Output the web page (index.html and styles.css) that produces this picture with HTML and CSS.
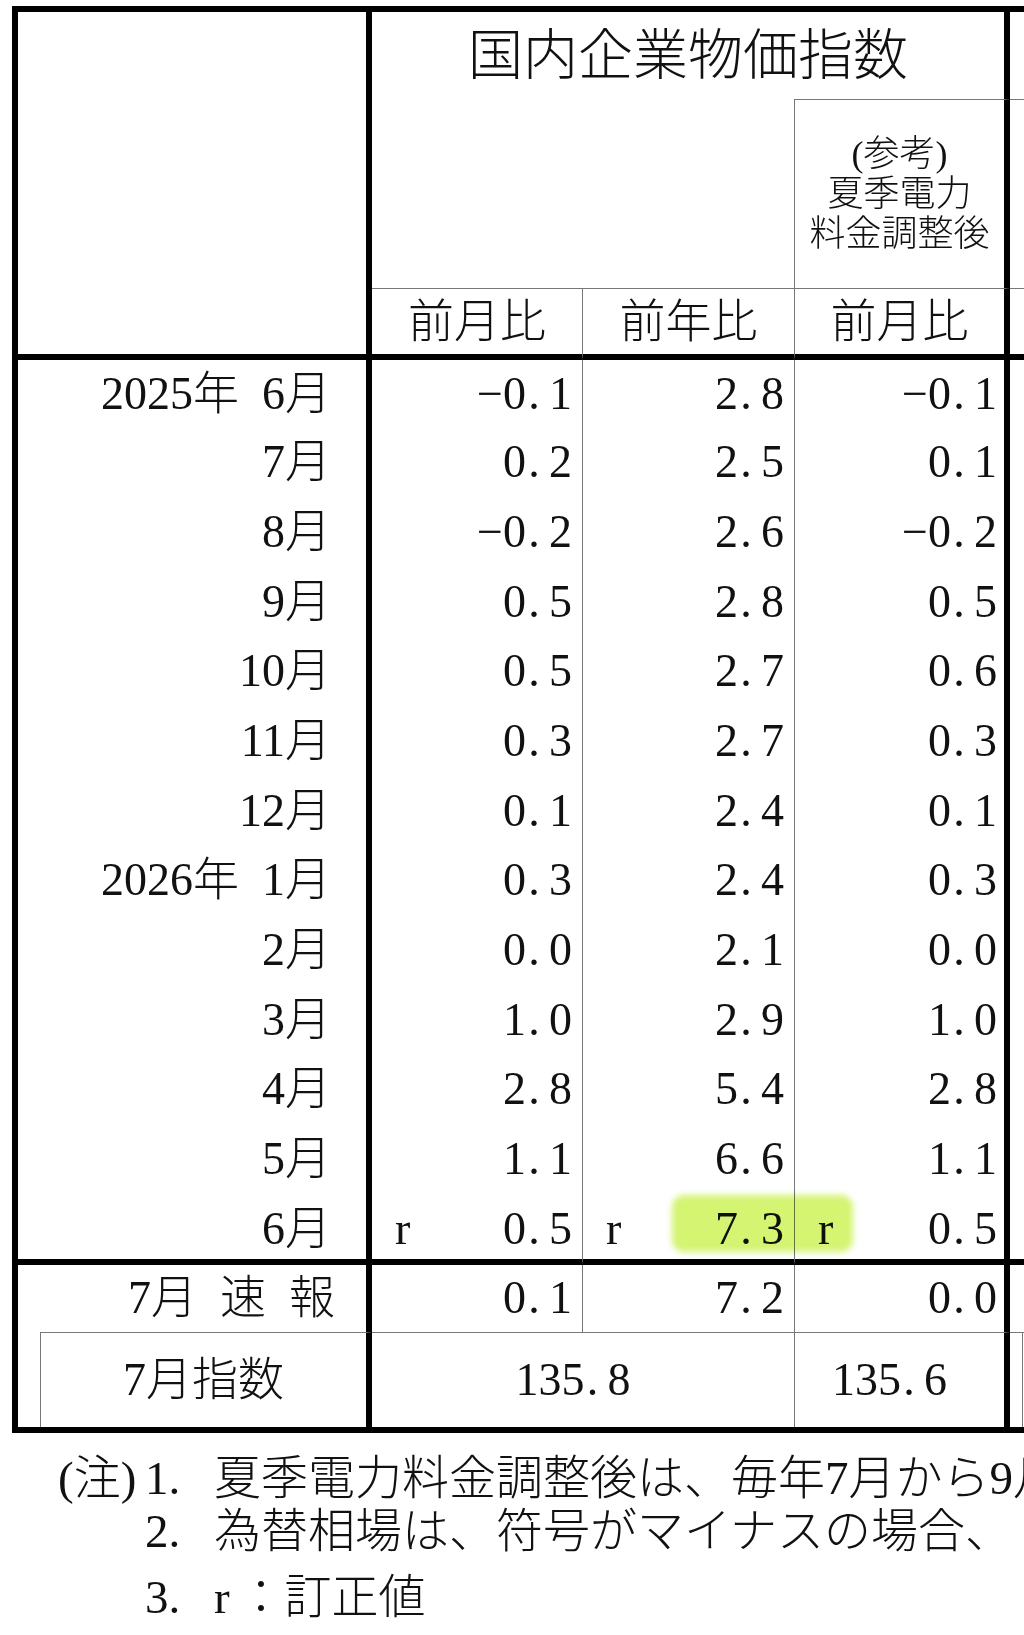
FILE: index.html
```html
<!DOCTYPE html>
<html lang="ja">
<head>
<meta charset="utf-8">
<title>国内企業物価指数</title>
<link rel="stylesheet" href="styles.css">
</head>
<body>
<div class="sheet">
  <div class="c hd-label"></div>
  <div class="c hd-title">国内企業物価指数</div>
  <div class="c hd-ext-a"></div>

  <div class="c hd-blank"></div>
  <div class="c hd-ref"><div>(参考)<br>夏季電力<br>料金調整後</div></div>
  <div class="c hd-ext-b"></div>

  <div class="c hd-sub s1">前月比</div>
  <div class="c hd-sub s2">前年比</div>
  <div class="c hd-sub s3">前月比</div>
  <div class="c hd-ext-c"></div>

  <div class="c lab">2025年&ensp;6月</div><div class="c v1">&minus;0<span class="pt">.</span>1</div><div class="c v2">2<span class="pt">.</span>8</div><div class="c v3">&minus;0<span class="pt">.</span>1</div><div class="c ext"></div>
  <div class="c lab">7月</div><div class="c v1">0<span class="pt">.</span>2</div><div class="c v2">2<span class="pt">.</span>5</div><div class="c v3">0<span class="pt">.</span>1</div><div class="c ext"></div>
  <div class="c lab">8月</div><div class="c v1">&minus;0<span class="pt">.</span>2</div><div class="c v2">2<span class="pt">.</span>6</div><div class="c v3">&minus;0<span class="pt">.</span>2</div><div class="c ext"></div>
  <div class="c lab">9月</div><div class="c v1">0<span class="pt">.</span>5</div><div class="c v2">2<span class="pt">.</span>8</div><div class="c v3">0<span class="pt">.</span>5</div><div class="c ext"></div>
  <div class="c lab">10月</div><div class="c v1">0<span class="pt">.</span>5</div><div class="c v2">2<span class="pt">.</span>7</div><div class="c v3">0<span class="pt">.</span>6</div><div class="c ext"></div>
  <div class="c lab">11月</div><div class="c v1">0<span class="pt">.</span>3</div><div class="c v2">2<span class="pt">.</span>7</div><div class="c v3">0<span class="pt">.</span>3</div><div class="c ext"></div>
  <div class="c lab">12月</div><div class="c v1">0<span class="pt">.</span>1</div><div class="c v2">2<span class="pt">.</span>4</div><div class="c v3">0<span class="pt">.</span>1</div><div class="c ext"></div>
  <div class="c lab">2026年&ensp;1月</div><div class="c v1">0<span class="pt">.</span>3</div><div class="c v2">2<span class="pt">.</span>4</div><div class="c v3">0<span class="pt">.</span>3</div><div class="c ext"></div>
  <div class="c lab">2月</div><div class="c v1">0<span class="pt">.</span>0</div><div class="c v2">2<span class="pt">.</span>1</div><div class="c v3">0<span class="pt">.</span>0</div><div class="c ext"></div>
  <div class="c lab">3月</div><div class="c v1">1<span class="pt">.</span>0</div><div class="c v2">2<span class="pt">.</span>9</div><div class="c v3">1<span class="pt">.</span>0</div><div class="c ext"></div>
  <div class="c lab">4月</div><div class="c v1">2<span class="pt">.</span>8</div><div class="c v2">5<span class="pt">.</span>4</div><div class="c v3">2<span class="pt">.</span>8</div><div class="c ext"></div>
  <div class="c lab">5月</div><div class="c v1">1<span class="pt">.</span>1</div><div class="c v2">6<span class="pt">.</span>6</div><div class="c v3">1<span class="pt">.</span>1</div><div class="c ext"></div>
  <div class="c lab end">6月</div><div class="c v1 rv end"><span class="r">r</span><span>0<span class="pt">.</span>5</span></div><div class="c v2 rv end"><span class="r">r</span><span>7<span class="pt">.</span>3</span></div><div class="c v3 rv end"><span class="r">r</span><span>0<span class="pt">.</span>5</span></div><div class="c ext end"></div>

  <div class="c lab flash">7月&ensp;速&ensp;報</div><div class="c v1">0<span class="pt">.</span>1</div><div class="c v2">7<span class="pt">.</span>2</div><div class="c v3">0<span class="pt">.</span>0</div><div class="c ext"></div>

  <div class="c gap"></div>
  <div class="c idx-lab">7月指数</div>
  <div class="c idx-v">135<span class="pt">.</span>8</div>
  <div class="c idx-v2">135<span class="pt">.</span>6</div>
  <div class="c tail-a"></div>
  <div class="c tail-b"></div>

  <div class="mark"></div>
</div>

<div class="notes">
  <div class="nl">(注)</div><div class="nn">1.</div><div class="nt">夏季電力料金調整後は、毎年7月から9月までの期間について、夏季電力料金の影響を調整したもの。</div>
  <div class="nl"></div><div class="nn">2.</div><div class="nt">為替相場は、符号がマイナスの場合、</div>
  <div class="nl"></div><div class="nn">3.</div><div class="nt"><span class="hw">r</span>：訂正値</div>
</div>
</body>
</html>
```

FILE: styles.css
```css
html, body {
  margin: 0;
  padding: 0;
  background: #fff;
  overflow: hidden;
}

body {
  width: 1024px;
  height: 1635px;
  font-family: "Liberation Serif", "Noto Sans CJK JP", serif;
  font-weight: 300;
  color: #111;
}

.sheet {
  position: relative;
  display: grid;
  width: max-content;
  grid-template-columns: 22px 332px 211px 212px 215px 13px 300px;
  grid-template-rows: 87px 190px 71px 67.67px repeat(11, 69.67px) 70.96px 67px 95px;
  margin: 6px 0 0 12px;
  border-top: 6px solid #000;
  border-left: 6px solid #000;
  border-bottom: 6px solid #000;
  font-size: 46px;
  line-height: 1;
}

.c {
  box-sizing: border-box;
  display: flex;
  align-items: center;
  min-width: 0;
  white-space: nowrap;
}

/* header */
.hd-label {
  grid-column: 1 / 3;
  grid-row: 1 / 4;
  border-right: 6px solid #000;
  border-bottom: 6px solid #000;
}

.hd-title {
  grid-column: 3 / 6;
  justify-content: center;
  border-right: 6px solid #000;
  font-size: 55px;
}

.hd-ext-a {
  grid-column: 6 / 8;
}

.hd-blank {
  grid-column: 3 / 5;
  border-right: 1px solid #777;
  border-bottom: 1px solid #777;
}

.hd-ref {
  grid-column: 5 / 6;
  justify-content: center;
  text-align: center;
  font-size: 36px;
  line-height: 40px;
  border-top: 1px solid #777;
  border-right: 6px solid #000;
  border-bottom: 1px solid #777;
}

.hd-ext-b {
  grid-column: 6 / 8;
  border-top: 1px solid #777;
  border-bottom: 1px solid #777;
}

.hd-sub {
  justify-content: center;
  border-right: 1px solid #777;
  border-bottom: 6px solid #000;
}

.hd-sub.s1 { grid-column: 3; }
.hd-sub.s2 { grid-column: 4; }
.hd-sub.s3 {
  grid-column: 5;
  border-right: 6px solid #000;
}

.hd-ext-c {
  grid-column: 6 / 8;
  border-bottom: 6px solid #000;
}

/* body rows */
.lab {
  grid-column: 1 / 3;
  justify-content: flex-end;
  padding-right: 35px;
  border-right: 6px solid #000;
}

.lab.flash {
  padding-right: 31px;
}

.v1, .v2, .v3 {
  justify-content: flex-end;
}

.v1 {
  grid-column: 3;
  padding-right: 10px;
  border-right: 1px solid #777;
}

.v2 {
  grid-column: 4;
  padding-right: 10px;
  border-right: 1px solid #777;
}

.v3 {
  grid-column: 5;
  padding-right: 7px;
  border-right: 6px solid #000;
}

.ext {
  grid-column: 6 / 8;
}

.end {
  border-bottom: 6px solid #000;
  padding-top: 5px;
}

.rv {
  justify-content: space-between;
  padding-left: 23px;
}

.pt {
  display: inline-block;
  width: 0.5em;
  padding-left: 0.05em;
  box-sizing: border-box;
}

/* index row */
.gap {
  grid-column: 1;
}

.idx-lab {
  grid-column: 2;
  justify-content: center;
  border-left: 1px solid #777;
  border-top: 1px solid #777;
  border-right: 6px solid #000;
}

.idx-v {
  grid-column: 3 / 5;
  justify-content: center;
  padding-right: 20px;
  border-top: 1px solid #777;
  border-right: 1px solid #777;
}

.idx-v2 {
  grid-column: 5;
  justify-content: center;
  padding-right: 20px;
  border-top: 1px solid #777;
  border-right: 6px solid #000;
}

.tail-a {
  grid-column: 6;
  border-top: 1px solid #777;
  border-right: 1px solid #777;
}

.tail-b {
  grid-column: 7;
  border-top: 1px solid #777;
}

/* highlighter mark over the revised value */
.mark {
  position: absolute;
  left: 654px;
  top: 1183px;
  width: 181px;
  height: 57px;
  border-radius: 12px;
  background: rgba(196, 240, 60, 0.72);
  filter: blur(3px);
  mix-blend-mode: multiply;
  pointer-events: none;
}

/* notes */
.notes {
  display: grid;
  width: max-content;
  grid-template-columns: 87px 69px max-content;
  grid-template-rows: 55px 53px 66px;
  align-items: end;
  margin: 17px 0 0 58px;
  font-size: 47px;
  line-height: 53px;
  white-space: nowrap;
}

.hw {
  display: inline-block;
  width: 0.5em;
}
```
